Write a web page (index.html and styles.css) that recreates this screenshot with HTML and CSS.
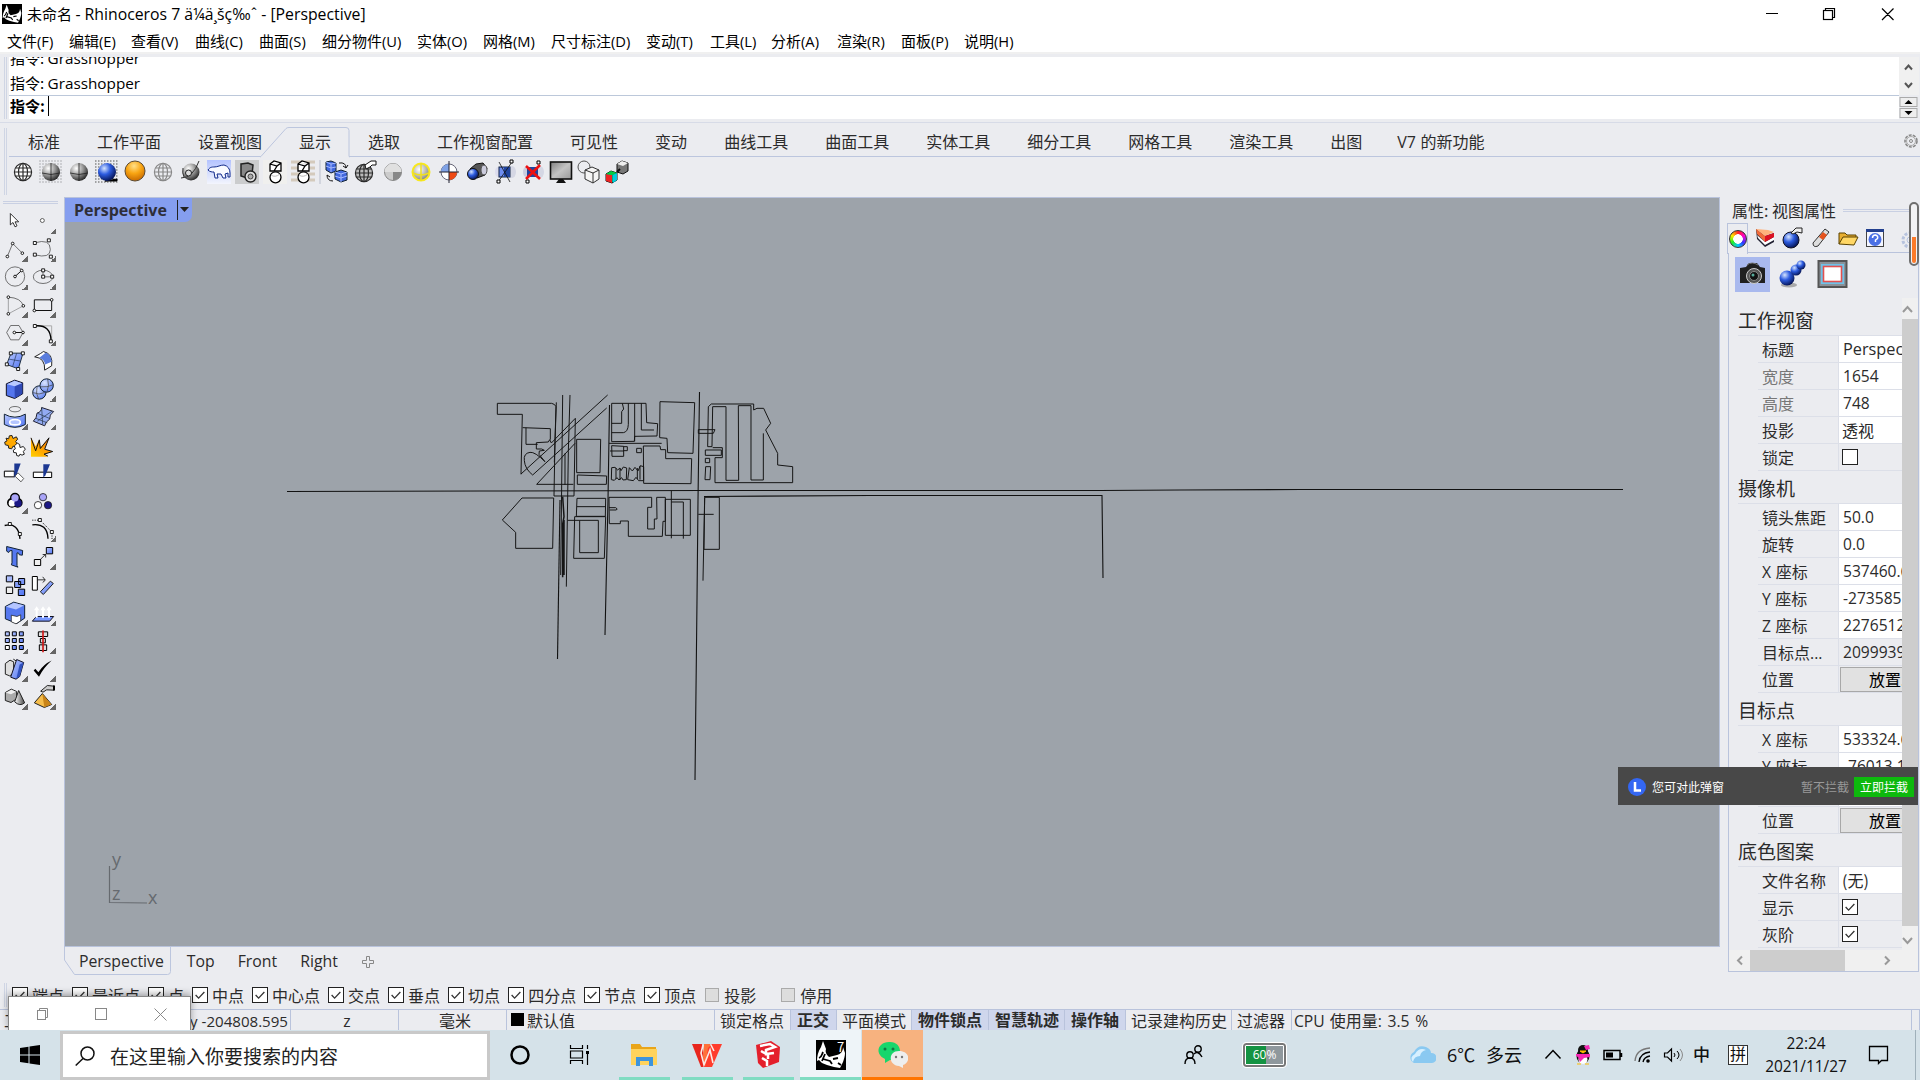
FILE: index.html
```
<!DOCTYPE html>
<html lang="zh-CN">
<head>
<meta charset="utf-8">
<title>未命名 - Rhinoceros 7</title>
<link rel="stylesheet" href="styles.css">
</head>
<body>
<svg class="defs" aria-hidden="true">
  <defs>
    <linearGradient id="blue" x1="0" y1="0" x2="1" y2="1"><stop offset="0" stop-color="#b9c8ff"/><stop offset="1" stop-color="#4f74f2"/></linearGradient>
    <linearGradient id="sky" x1="0" y1="0" x2="0" y2="1"><stop offset="0" stop-color="#b4c3ff"/><stop offset="1" stop-color="#f3f5fd"/></linearGradient>
    <linearGradient id="gray" x1="0" y1="0" x2="1" y2="0"><stop offset="0" stop-color="#fff"/><stop offset="1" stop-color="#444"/></linearGradient>
    <linearGradient id="screen" x1="0" y1="0" x2="1" y2="1"><stop offset="0" stop-color="#808080"/><stop offset=".5" stop-color="#c4c4c4"/><stop offset="1" stop-color="#999"/></linearGradient>
    <linearGradient id="flame" x1="0" y1="1" x2="1" y2="0"><stop offset="0" stop-color="#ffd000"/><stop offset="1" stop-color="#ff6a00"/></linearGradient>
    <radialGradient id="ballGray" cx=".35" cy=".3" r=".75"><stop offset="0" stop-color="#fff"/><stop offset=".5" stop-color="#999"/><stop offset="1" stop-color="#222"/></radialGradient>
    <radialGradient id="ballBlue" cx=".35" cy=".3" r=".75"><stop offset="0" stop-color="#d5e4ff"/><stop offset=".45" stop-color="#2d5ce0"/><stop offset="1" stop-color="#03104e"/></radialGradient>
    <radialGradient id="ballSoft" cx=".35" cy=".3" r=".75"><stop offset="0" stop-color="#dbe5ff"/><stop offset="1" stop-color="#5d80ee"/></radialGradient>
    <radialGradient id="ballOrange" cx=".45" cy=".25" r=".75"><stop offset="0" stop-color="#ffe08a"/><stop offset=".5" stop-color="#f9a512"/><stop offset="1" stop-color="#c86a00"/></radialGradient>
    <radialGradient id="ballYellow" cx=".4" cy=".35" r=".7"><stop offset="0" stop-color="#fff"/><stop offset=".7" stop-color="#a8a8a0"/><stop offset="1" stop-color="#777"/></radialGradient>
    <symbol id="rhino" viewBox="0 0 30 30">
      <rect width="30" height="30" fill="#000"/>
      <path d="M1 21c0-5 1-9 4-14L7 1l3 8c-1 3 0 5 3 8l8-2c4-1 6-4 6-8l2 6c0 3-1 6-2 9l-3 6-6-1-7-2-5-2-3-3z" fill="#fff"/>
      <path d="M3 18c3-1 3-4 4-6M7 19l7 2 2 3M17 19l5-1M22 23l3 2M9 14l-3 7" stroke="#000" stroke-width="1.8" fill="none"/>
    </symbol>
    <symbol id="globe" viewBox="0 0 24 24"><g fill="none" stroke="currentColor" stroke-width="1.2"><circle cx="12" cy="12" r="8.6"/><ellipse cx="12" cy="12" rx="4.500" ry="8.6"/><path d="M12 3.5v17M3.5 12h17M5 8h14M5 16h14"/></g></symbol>
    <symbol id="prism" viewBox="0 0 24 24"><path d="M7 4l4-3 7 2v8H7zM7 4l7 2 4-3M14 6l-3 5" fill="#fff" stroke="#000" stroke-width="1.3"/><circle cx="12.5" cy="17.3" r="5.500" fill="#fff" stroke="#000" stroke-width="1.3"/><path d="M8 15q4 3 9-1" fill="none" stroke="#bbb"/></symbol>
    <symbol id="check" viewBox="0 0 16 16"><path d="M3 8l3.4 3.6L13 4.6" fill="none" stroke="#333" stroke-width="1.5"/></symbol>
  </defs>
</svg>

<header class="titlebar">
  <svg class="app-icon"><use href="#rhino"/></svg>
  <div class="title">未命名 <i>- Rhinoceros 7 ä¼ä¸šç‰ˆ - [Perspective]</i></div>
  <svg class="winctl" viewBox="0 0 140 30"><g fill="none" stroke="#000" stroke-width="1.2"><path d="M6 13.500h12M122 8.500l11.500 11.500M133.500 8.500l-11.500 11.500M65.500 10V8.500h9v9H73"/><rect x="63.500" y="10.500" width="9" height="9"/></g></svg>
</header>
<nav class="menu">
  <span>文件<i>(F)</i></span><span>编辑<i>(E)</i></span><span>查看<i>(V)</i></span><span>曲线<i>(C)</i></span><span>曲面<i>(S)</i></span><span>细分物件<i>(U)</i></span><span>实体<i>(O)</i></span><span>网格<i>(M)</i></span><span>尺寸标注<i>(D)</i></span><span>变动<i>(T)</i></span><span>工具<i>(L)</i></span><span>分析<i>(A)</i></span><span>渲染<i>(R)</i></span><span>面板<i>(P)</i></span><span>说明<i>(H)</i></span>
</nav>

<section class="command">
  <div class="grip"></div>
  <div class="cmd-main">
    <div class="history"><p>指令: <i>Grasshopper</i></p><p>指令: <i>Grasshopper</i></p></div>
    <div class="prompt"><b>指令:</b><span class="caret"></span></div>
  </div>
  <div class="cmd-side">
    <svg class="cmd-scroll" viewBox="0 0 20 38"><path d="M6 12.500l3.500-4 3.500 4M6 26l3.500 4 3.500-4" fill="none" stroke="#555" stroke-width="2"/></svg>
    <svg class="cmd-spin" viewBox="0 0 20 23"><g fill="#eee" stroke="#aaa"><rect x="1" y="1.500" width="17" height="9"/><rect x="1" y="12.500" width="17" height="9"/></g><path d="M9.500 4l4 4h-8zM9.500 19l4-4h-8z"/></svg>
  </div>
</section>

<section class="toolbar">
  <div class="grip"></div>
  <div class="toolbar-main">
    <div class="tabs">
      <span>标准</span><span>工作平面</span><span>设置视图</span>
      <span class="on"><svg class="tab-shape" viewBox="0 0 92 32"><path d="M0 31.500L26 2.500q1-1 3-1h57q3 0 3 3v27" fill="#ebecf0" stroke="#bcc6de"/><path d="M1 31.500h88" stroke="#ebecf0" stroke-width="2"/></svg><em>显示</em></span>
      <span>选取</span><span>工作视窗配置</span><span>可见性</span><span>变动</span><span>曲线工具</span><span>曲面工具</span><span>实体工具</span><span>细分工具</span><span>网格工具</span><span>渲染工具</span><span>出图</span><span class="v7"><i>V7</i> 的新功能</span>
      <svg class="gear" viewBox="0 0 16 16"><circle cx="8" cy="8" r="6" fill="none" stroke="#888" stroke-width="1.600" stroke-dasharray="3 1.200"/><circle cx="8" cy="8" r="4.500" fill="none" stroke="#aaa"/><circle cx="8" cy="8" r="1.500" fill="none" stroke="#888"/></svg>
    </div>
    <div class="icons">
      <svg viewBox="0 0 24 24"><circle cx="12" cy="12" r="8" fill="#fff"/><use href="#globe"/></svg>
      <svg viewBox="0 0 24 24"><path d="M0 1h24M0 4h24M0 7h24M0 10h24M0 13h24M0 16h24M0 19h24M0 22h24" stroke="#c4c4c8" stroke-width="1.500" stroke-dasharray="2 1"/><circle cx="12" cy="12" r="9" fill="url(#ballGray)"/><path d="M12 3v18M3 13q9 3 18 0" stroke="#222" fill="none" stroke-width=".8"/></svg>
      <svg viewBox="0 0 24 24"><circle cx="12" cy="12" r="9" fill="url(#ballGray)"/><path d="M12 3v18M3 13q9 3 18 0" stroke="#222" fill="none" stroke-width=".8"/></svg>
      <svg viewBox="0 0 24 24"><path d="M0 1h24M0 4h24M0 7h24M0 10h24M0 13h24M0 16h24M0 19h24M0 22h24" stroke="#888" stroke-width="1.500" stroke-dasharray="1.500 1.500"/><path d="M10 21h12v-2z" fill="#000" stroke="#000"/><circle cx="12" cy="12" r="9" fill="url(#ballBlue)"/></svg>
      <svg viewBox="0 0 24 24"><circle cx="12" cy="11" r="10" fill="url(#ballOrange)" stroke="#5a4a33"/></svg>
      <svg viewBox="0 0 24 24" color="#888"><use href="#globe"/></svg>
      <svg viewBox="0 0 24 24"><circle cx="12" cy="12" r="8.500" fill="url(#ballGray)"/><path d="M2 18q12 0 18-17M4 8q-1 5 1 9" fill="none" stroke="#333"/><circle cx="9.500" cy="13" r="3" fill="#ddd" stroke="#222"/></svg>
      <svg viewBox="0 0 24 24"><rect width="24" height="24" fill="url(#sky)"/><path d="M1 10c2-3 4-3 6-3 4 0 6-2 10-2 4 1 6 4 6 8v4h-2v-4l-3 1 1 4h-3l-2-4h-4l1 4H8l-1-6c-2 0-4 0-6-2z" fill="#f9faff" stroke="#112a8a"/></svg>
      <svg viewBox="0 0 24 24"><rect width="24" height="24" fill="#cbcccd"/><path d="M6 4l7-1 5 2-1 9-5 4-6-2z" fill="#888" stroke="#222" stroke-width="1.500"/><circle cx="15.500" cy="16.500" r="5.500" fill="#ddd" stroke="#222" stroke-width="1.400"/><circle cx="15.500" cy="16.500" r="2.500" fill="#aaa" stroke="#444"/></svg>
      <svg viewBox="0 0 24 24"><rect width="24" height="24" fill="#f0f0ee"/><use href="#prism"/></svg>
      <svg viewBox="0 0 24 24"><path d="M0 2h24M0 8h24M0 14h24M0 20h24" stroke="#d4cabc" stroke-width="3"/><use href="#prism"/></svg>
      <span class="sep"></span>
      <svg viewBox="0 0 24 24"><path d="M1 2l5-1 5 2v8l-5 2-5-3zM10 12l6-2 6 2v8l-6 2-6-3z" fill="#4268dd" stroke="#123"/><path d="M1 2l5 2 5-1M6 4v8M10 12l6 2 6-2M16 14v8M1 6l5 2 5-1M10 16l6 2 6-2" fill="none" stroke="#a5b9ff"/><path d="M14 3q7-1 7 5M21 8l-3-2M21 8l2-3M2 15q0 6 6 6M2 15l3 2" fill="none" stroke="#111"/></svg>
      <svg viewBox="0 0 24 24"><circle cx="11" cy="13" r="8.500" fill="#bbb"/><g transform="translate(-1 1)"><use href="#globe" width="24" height="24"/></g><path d="M12 5l6-4h5v4h-4l-2 2-4 2z" fill="#fff" stroke="#111"/></svg>
      <svg viewBox="0 0 24 24"><circle cx="12" cy="12" r="8.500" fill="#ccc" stroke="#888"/><path d="M3.500 12a8.500 8.500 0 0 1 17 0z" fill="#e0e0e0"/><path d="M12 12h8.500a8.500 8.500 0 0 1-8.500 8.500z" fill="#888"/></svg>
      <svg viewBox="0 0 24 24"><circle cx="12" cy="12" r="8.500" fill="url(#ballYellow)" stroke="#f8e81c" stroke-width="2"/><path d="M12 3v18M4 13q8 4 16 0" stroke="#f0e020" stroke-width="1.500" fill="none"/></svg>
      <svg viewBox="0 0 24 24"><circle cx="12" cy="12" r="8" fill="#fff" stroke="#667"/><path d="M12 4a8 8 0 0 0-8 8h8z" fill="#7fa2e6"/><path d="M12 12h8a8 8 0 0 1-8 8z" fill="#f04a14"/><path d="M12 1v22M2 12h20" stroke="#223"/></svg>
      <svg viewBox="0 0 24 24"><path d="M5 9l6-5 7-1 4 5-2 7-8 3z" fill="#555" stroke="#111"/><circle cx="8" cy="14" r="5.500" fill="url(#ballBlue)" stroke="#111"/><ellipse cx="19" cy="10" rx="3" ry="5" fill="#ccd" stroke="#555"/></svg>
      <svg viewBox="0 0 24 24"><ellipse cx="5" cy="12" rx="3" ry="5" fill="#dde"/><ellipse cx="19" cy="12" rx="4" ry="6" fill="#d5d7e4"/><rect x="6" y="7" width="11" height="10" fill="#6d8df0" stroke="#124"/><path d="M11 7v10h6V7z" fill="#20449e"/><path d="M5 22L19 2M6 2l11 20" stroke="#111" stroke-width=".8"/><path d="M4 20h3v3H4zM17 0h3v3h-3z" fill="#fff" stroke="#000"/></svg>
      <svg viewBox="0 0 24 24"><ellipse cx="5" cy="12" rx="3" ry="5" fill="#ccd"/><ellipse cx="19" cy="12" rx="4" ry="6" fill="#d5d7e4"/><rect x="6" y="7" width="11" height="10" fill="#20449e"/><path d="M5 20h3v3H5zM16 1h3v3h-3z" fill="#fff" stroke="#000"/><path d="M5 6l14 13M19 5L5 19" stroke="#e11" stroke-width="2.600"/></svg>
      <svg viewBox="0 0 24 24"><rect x="1.500" y="2" width="21" height="17" fill="url(#screen)" stroke="#111" stroke-width="1.600"/><path d="M10 19h4l3 4H7z" fill="#111"/></svg>
      <svg viewBox="0 0 24 24"><circle cx="7" cy="7" r="6" fill="none" stroke="#555"/><path d="M8 10l7-3 7 3v9l-6 4-8-4zM8 10l8 3v10M16 13l6-3" fill="#f5f5f5" stroke="#333"/></svg>
      <svg viewBox="0 0 24 24"><path d="M12 4l5-3 6 2v8l-5 3-6-2z" fill="#777" stroke="#111"/><path d="M12 4l5-3 6 2-5 3z" fill="#eee"/><path d="M1 14l5-3 6 2v7l-5 3-6-2z" fill="#0a8" stroke="#111"/><path d="M1 14l6 1v8l-6-2z" fill="#e22"/><path d="M1 14l5-3 6 2-5 2z" fill="#0c4"/><path d="M8 15l4-2v7l-4 3z" fill="#0cd"/><path d="M12 12l3-3" stroke="#111" stroke-width="2"/></svg>
    </div>
  </div>
</section>

<main class="work">
  <aside class="tools">
    <svg viewBox="0 47 84 83"><path d="M31 69v34l8-7 6 13 6-3-6-12h11z" fill="#fff" stroke="#111" stroke-width="2.500"/></svg>
    <svg class="more" viewBox="84 47 84 83"><circle cx="127" cy="90" r="6" fill="#fff" stroke="#444" stroke-width="2.500"/></svg>
    <svg class="more" viewBox="0 130 84 83"><path d="M22 197l16-39 29 29" class="ln"/><g class="nd"><circle cx="22" cy="197" r="4"/><circle cx="38" cy="158" r="4"/><circle cx="67" cy="187" r="4"/></g></svg>
    <svg class="more" viewBox="84 130 84 83"><path d="M104 156q47-14 47 20 0 28-47 16" class="ln"/><path class="nd" d="M100 152h9v9h-9zM142 144h9v9h-9zM100 187h9v9h-9zM148 193h9v9h-9z"/></svg>
    <svg class="more" viewBox="0 213 84 83"><circle cx="45" cy="256" r="29" class="ln"/><path d="M45 256l20-18" stroke="#111" stroke-width="3"/><g class="nd"><circle cx="45" cy="256" r="4"/><circle cx="65" cy="238" r="4"/></g></svg>
    <svg class="more" viewBox="84 213 84 83"><ellipse cx="129" cy="257" rx="29" ry="20" class="ln"/><path d="M129 257v-20M129 257h27" class="ln"/><path class="nd" d="M125 233h9v9h-9zM125 252h9v9h-9zM152 252h9v9h-9z"/></svg>
    <svg class="more" viewBox="0 295 84 83"><path d="M25 316v50l45-24" class="ln" stroke-opacity=".6"/><path d="M25 316q38 2 45 26" class="ln"/><g class="nd"><circle cx="25" cy="316" r="4"/><circle cx="25" cy="366" r="4"/><circle cx="70" cy="342" r="4"/></g></svg>
    <svg class="more" viewBox="84 295 84 83"><path d="M103 324h52v32h-52z" fill="none" stroke="#111" stroke-width="3"/><g class="nd"><circle cx="155" cy="324" r="4"/><circle cx="103" cy="356" r="4"/></g></svg>
    <svg class="more" viewBox="0 378 84 83"><path d="M32 400h25l12 21-12 22H32l-12-22z" class="ln"/><path d="M42 421h26" stroke="#111" stroke-width="3"/><g class="nd"><circle cx="43" cy="421" r="4"/><circle cx="69" cy="421" r="4"/></g></svg>
    <svg class="more" viewBox="84 378 84 83"><path d="M108 401h47v44" fill="none" stroke="#aaa" stroke-width="3"/><path d="M108 401q44-3 45 44" fill="none" stroke="#000" stroke-width="4"/><path class="nd" d="M100 397h9v9h-9zM148 443h9v9h-9z"/></svg>
    <svg class="more" viewBox="0 461 84 83"><path d="M33 482h36l-14 47-35-13z" fill="url(#blue)" stroke="#234" stroke-width="3"/><path d="M50 482l-12 40M27 500l36 6" stroke="#235" stroke-width="2"/><path class="nd" d="M28 478h9v9h-9zM64 478h9v9h-9zM16 511h9v9h-9zM50 525h9v9h-9z"/></svg>
    <svg class="more" viewBox="84 461 84 83"><path d="M104 493q22-12 26-16 30 6 25 43l-21 13q2-37-30-40z" fill="#fff" stroke="#222" stroke-width="3"/><path d="M118 496l20-16q16 8 17 28l-20 8q-1-14-17-20z" fill="#5a7ddd"/></svg>
    <svg class="more" viewBox="0 544 84 83"><path d="M19 573l25-11 24 8v33l-24 14-25-9z" fill="#5475ed" stroke="#112" stroke-width="3"/><path d="M21 574l23-10 22 7-22 9z" fill="#b9c9ff"/><path d="M44 581l23-10v32l-23 13z" fill="#3049b5"/></svg>
    <svg class="more" viewBox="84 544 84 83"><g fill="url(#ballSoft)" stroke="#123" stroke-width="3"><circle cx="118" cy="599" r="20"/><circle cx="140" cy="578" r="20"/></g><path d="M98 599q20 9 36 0M111 582q-5 20 5 37M122 582q18 2 38-6M143 558q6 20-2 39" class="ln"/></svg>
    <svg class="more" viewBox="0 627 84 83"><ellipse cx="45" cy="648" rx="17" ry="8" class="ln"/><path d="M13 663q32 18 63 0v31q-31 17-63 0z" fill="url(#blue)" stroke="#123" stroke-width="3"/><ellipse cx="45" cy="687" rx="16" ry="8" fill="#b5c6ff" stroke="#fff" stroke-width="5"/></svg>
    <svg class="more" viewBox="84 627 84 83"><path d="M125 643l36 12q-14 10-12 23-12 7-15 20l-34-14q11-10 11-24 14-4 14-17z" fill="#93abf2" stroke="#223" stroke-width="3"/><path d="M112 660l37 16M112 684l44-30M125 643l3 51M106 675l36 14" stroke="#234" stroke-width="2"/></svg>
    <svg viewBox="0 710 84 83"><path d="M18 734l8 2 2-9 8-1 3 9 10-5 4 7-6 7 6 9-6 7-8-2-4 8-9-2-1-8-9-2-2-8 7-4z" fill="#ffa900" stroke="#222" stroke-width="3"/><path d="M43 757l9-8 7 4 1 9 10-3 6 8-6 7 3 8-7 3-6-3-3 6-7-2-1-8-8-1-1-7 6-4z" fill="#fff" stroke="#222" stroke-width="3"/></svg>
    <svg viewBox="84 710 84 83"><path d="M93 790v-57l14 25 11-19 3 22 26-27-14 33 25 7-26 10 12 6z" fill="url(#flame)"/><path d="M93 733l14 39 11-33 3 26 26-32-13 34 24 7-26 8 12 6" fill="none" stroke="#111" stroke-width="3"/></svg>
    <svg viewBox="0 793 84 83"><path d="M13 832h30v17H13z" fill="#fff" stroke="#000" stroke-width="3"/><path d="M43 809h19l-13 36-6 7z" fill="#1c3892"/><path d="M45 847l9-10 17 17-8 10z" fill="#fff" stroke="#444" stroke-width="2.500"/></svg>
    <svg viewBox="84 793 84 83"><path d="M100 835h55v16h-55z" fill="#fff" stroke="#000" stroke-width="3"/><path d="M130 811h20l-14 34-6 6z" fill="#1c3892"/></svg>
    <svg class="more" viewBox="0 875 84 83"><g stroke="#000" stroke-width="8"><circle cx="36" cy="925" r="11"/><circle cx="53" cy="925" r="11"/><circle cx="45" cy="910" r="11"/></g><circle cx="36" cy="926" r="10" fill="#fff"/><circle cx="54" cy="926" r="11" fill="#1b1785"/><circle cx="45" cy="910" r="11" fill="#a9a4f8"/></svg>
    <svg viewBox="84 875 84 83"><g stroke="#222" stroke-width="2.500"><circle cx="129" cy="908" r="11" fill="#a9a4f8"/><circle cx="114" cy="932" r="11" fill="#fff"/><circle cx="144" cy="932" r="11" fill="#1b1785"/></g></svg>
    <svg viewBox="0 958 84 83"><path d="M14 992q42-10 46 40" fill="none" stroke="#000" stroke-width="4"/><path class="nd" d="M25 983h9v9h-9zM55 1013h9v9h-9z"/></svg>
    <svg class="more" viewBox="84 958 84 83"><path d="M97 990q45-6 47 42" fill="none" stroke="#000" stroke-width="4"/><path d="M97 976h23l36 36v24" fill="none" stroke="#000" stroke-width="3" stroke-dasharray="3 4"/><path class="nd" d="M115 971h9v9h-9zM151 1007h9v9h-9z"/></svg>
    <svg viewBox="0 1041 84 83"><path d="M20 1054l48 12-1 14-9-1-2-5-5-1v38l3 5-20-7 2-6v-37l-7 1-3 5-6-4z" fill="#5578f0" stroke="#123" stroke-width="3"/></svg>
    <svg class="more" viewBox="84 1041 84 83"><path d="M117 1097l20-20m-9 1h9v9" fill="none" stroke="#111" stroke-width="2.500"/><path d="M139 1057h19v19h-19z" fill="url(#blue)" stroke="#000" stroke-width="3"/><path d="M103 1093h19v18h-19z" fill="#eee" stroke="#000" stroke-width="3"/></svg>
    <svg viewBox="0 1124 84 83"><g fill="url(#blue)" stroke="#000" stroke-width="3"><path d="M19 1141h19v18H19zM56 1149h18v18H56zM44 1158h18v18H44zM55 1181h19v19H55z"/></g><path d="M19 1175h19v19H19z" fill="#eee" stroke="#000" stroke-width="3"/></svg>
    <svg viewBox="84 1124 84 83"><path d="M97 1143h15v41H97z" fill="#fff" stroke="#000" stroke-width="3"/><path d="M113 1153h22m-7-9l8 10-8 7" fill="none" stroke="#111" stroke-width="2.500"/><path d="M121 1189l30-32 9 7-30 33z" fill="url(#blue)" stroke="#222" stroke-width="3"/></svg>
    <svg class="more" viewBox="0 1207 84 83"><path d="M16 1232l25-13 33 9v39l-24 16-34-14z" fill="#5578ef" stroke="#123" stroke-width="3"/><path d="M18 1233l24-12 30 8-24 12z" fill="#b4c5ff"/><path d="M34 1258l17 4 11-5v18l-14 9-14-6z" fill="#fff" stroke="#111" stroke-width="2"/></svg>
    <svg class="more" viewBox="84 1207 84 83"><path d="M109 1262h52l-12 14H97z" fill="#7998ff" stroke="#112" stroke-width="3"/><path d="M110 1266v-27M129 1266v-27M147 1266v-27" stroke="#fff" stroke-width="6"/><path d="M102 1243l8-12 8 12zM121 1243l8-12 8 12zM139 1243l8-12 8 12z" fill="#fff"/></svg>
    <svg class="more" viewBox="0 1289 84 83"><g fill="url(#blue)" stroke="#000" stroke-width="3"><path d="M16 1306h12v12H16zM37 1306h12v12H37zM58 1306h12v12H58zM16 1326h12v12H16zM37 1326h12v12H37zM58 1326h12v12H58zM37 1347h12v12H37zM58 1347h12v12H58z"/><path fill="#fff" d="M16 1347h12v12H16z"/></g></svg>
    <svg class="more" viewBox="84 1289 84 83"><path d="M115 1306h28v14h-28zM121 1326h15v13h-15zM118 1345h22v17h-22z" fill="#ddd" stroke="#000" stroke-width="3"/><path d="M129 1302v65" stroke="#d01818" stroke-width="5"/></svg>
    <svg class="more" viewBox="0 1372 84 83"><path d="M16 1400l14-10 11 5v34l-12 8-13-5z" fill="#ddd" stroke="#222" stroke-width="3"/><path d="M40 1387l8 5" stroke="#222" stroke-width="3"/><path d="M50 1388l21 9-12 42-11 8-16-6z" fill="url(#blue)" stroke="#112" stroke-width="3"/><path d="M71 1397l-12 42-10 7 10-43z" fill="#3151bd"/></svg>
    <svg class="more" viewBox="84 1372 84 83"><path d="M101 1421l5-5 9 10q16-24 40-35-25 22-38 49z" fill="#000"/></svg>
    <svg class="more" viewBox="0 1455 84 83"><path d="M16 1486l18-10 16 7v22l-17 11-17-6z" fill="#aaa" stroke="#222" stroke-width="3"/><path d="M17 1487l17-9 14 6-15 7z" fill="#eee"/><path d="M56 1480l18 37q-14 12-30-3z" fill="url(#gray)" stroke="#222" stroke-width="3"/></svg>
    <svg class="more" viewBox="84 1455 84 83"><path d="M122 1482l20-17 20 2v12l-22-1-11 7z" fill="#ccc" stroke="#222" stroke-width="3"/><path d="M162 1465v15" stroke="#000" stroke-width="6"/><path d="M127 1489l28 33-22 9-30-14z" fill="#f5bd4b" stroke="#222" stroke-width="3"/><path d="M127 1490l27 32-21 8z" fill="#c98418"/></svg>
  </aside>

  <section class="viewport">
    <svg class="scene" viewBox="65 198 1654 748">
      <g fill="none" stroke="#111" stroke-width="1.100">
        <path d="M287 491.500L480 491 704 490.500 1100 490.500 1180 490 1300 489.500 1623 489.500"/>
        <path d="M704 496.500L870 495.500 1102 495.500 1103 578"/>
        <path d="M699.500 392L698 500 697 600 695 780"/>
        <path d="M609.500 405L608 500 605 635"/>
        <path d="M556.500 402L559.500 520 557.500 659" stroke-opacity="0"/>
        <path d="M560 500L557.500 659"/>
      </g>
      <g transform="translate(480 380) scale(.333333)" fill="none" stroke="#151515" stroke-width="3">
        <path d="M52 70H215q10 2 13 10l-3 103-3 165h60l4-233-72 74-5-10-4 7-36 2v19h16l8 4-15 2-1 10 18 22q-30-30-45-28-20 3-17 25 2 25 25 43M52 70v33h75l-4 180"/>
        <path d="M128 143l83 3v33M138 143v50h35M229 67l-6 180M248 45l-6 540M270 45l-5 170-6 405M383 45L123 282M380 84L158 285M285 190L170 313h110M290 178h72l-2 100h-70zM292 285l88 3-1 25h-87zM255 220v95"/>
        <path d="M395 185V70h103l2 58 33 3-2 37-67 1-1 15zM464 70v114M395 130h30V95l6-8-4-17M395 158h35q14-2 15-25V70M484 70v80h38M387 190h158M540 65l104 3-5 152-76-2-2-43-22-2zM395 197l36 2v30h-35zM430 200h12v12h-12M390 213h42M470 205h14v13h-14zM490 198h50l2 11h15v27h78l-2 75-142-1z"/>
        <path d="M395 263l10-1 8 8 7-6 3 8 7-11 10 3-1 35-10 1-4-7-8 7-6-7-8 8-9-2zM408 264v33M420 266v34M443 299l5-36 9 10 8-11 9 11 7-16 10 3v42h-15l-8-10-8 10zM472 264v33M480 258v41"/>
        <path d="M683 200l2-120 9-8h127v18l10-5h20l21 45-15 20 36 70v35l45 5v48H705v-75h22v-30h-29M698 80h40v221h38l-1-224h38v223h37V160M698 80l-2 120h-13M655 149h50l-5 11h-45zM676 210h48v16h-48zM676 235h13v13h-13zM677 260h15l-2 39h-15z"/>
        <path d="M126 354h95l-3 151H107v-48l-40-37zM291 355h86l-1 54h-87zM291 380h86M284 410h93l-4 125h-92zM263 421h92v97h-56v-96M387 352h128v30h-12v65h20v-30h8l-1-65h26v72h-7l-2 45H445v-46h-24v8h-33zM387 383h20q8 4 2 7h-20M556 358h75v108h-75zM574 332v143M574 366h36v110M674 352h44v156h-46zM655 403h46M674 352l-5 250"/>
        <path d="M248 350l4 60-4 22v160M252 420v165" stroke-width="4.500"/>
      </g>
      <path d="M109.500 866v36.500L147 903" fill="none" stroke="#666a6f" stroke-width="1.200"/>
      <g class="axis"><text x="112" y="866">y</text><text x="112" y="900">z</text><text x="148" y="904">x</text></g>
    </svg>
    <div class="view-label"><span>Perspective</span><svg viewBox="0 0 14 24"><path d="M.5 2v20" stroke="#222"/><path d="M3 9h9l-4.500 5z" fill="#222"/></svg></div>
  </section>

  <nav class="view-tabs">
    <span class="current"><svg viewBox="0 0 108 28"><path d="M.5 0v13l10 14.500h93q3 0 3-3V0" fill="none" stroke="#bcc6de"/></svg><em>Perspective</em></span><span>Top</span><span>Front</span><span>Right</span>
    <svg class="plus" viewBox="0 0 12 12"><path d="M4.500.5h3v4h4v3h-4v4h-3v-4h-4v-3h4z" fill="none" stroke="#888"/></svg>
  </nav>

  <aside class="panel">
    <h1>属性: 视图属性</h1>
    <div class="panel-tabs">
      <div class="ptab on-top"><span class="wheel"></span></div>
      <svg viewBox="0 0 24 24"><path d="M3 3l9 7 9-3v9l-9 5-8-8z" fill="#223"/><path d="M3 3l9 7 9-4-6-2z" fill="#ffb27c"/><path d="M3 3l9 7v6L4 8z" fill="#f06a3a"/><path d="M4 9l8 7 9-5v3l-9 5-7-7z" fill="#fff"/><path d="M12 10l9-3v4l-9 5z" fill="#d12"/></svg>
      <svg viewBox="0 0 24 24"><circle cx="11" cy="14" r="8" fill="url(#ballBlue)" stroke="#112"/><path d="M11 7l5-5h6v5l-5-1-4 2z" fill="#eee" stroke="#222"/></svg>
      <svg viewBox="0 0 24 24"><path d="M5 17L17 3l4 3L10 20q-5 2-5-3z" fill="#ddd" stroke="#333"/><path d="M11 11l4-5 4 3-4 5z" fill="#e5521c"/></svg>
      <svg viewBox="0 0 24 24"><path d="M3 18V7h6l2 2h9v3" fill="#e8ae30" stroke="#5a4300"/><path d="M3 18l4-7h15l-4 8z" fill="#ffd765" stroke="#5a4300"/></svg>
      <svg viewBox="0 0 24 24"><rect x="3.500" y="3.500" width="17" height="17" fill="#f4f6ff" stroke="#444"/><path d="M3 3h18v3H3z" fill="#223f8e"/><circle cx="12" cy="13.500" r="6.500" fill="#4a70e5"/><path d="M9.500 12q0-3 3-3 3 1 2 3.500l-2 1.500v2" fill="none" stroke="#fff" stroke-width="1.500"/></svg>
      <svg class="pgear" viewBox="0 0 24 24"><circle cx="14" cy="14" r="7" fill="none" stroke="#b7c3de" stroke-width="3" stroke-dasharray="3 1.500"/><circle cx="14" cy="14" r="3" fill="none" stroke="#b7c3de"/></svg>
    </div>
    <div class="panel-body">
      <div class="modes">
        <svg class="sel" viewBox="0 0 35 35"><path d="M5 11l6-1 3-4h8l3 4 5 1v15H5z" fill="#202020"/><path d="M12 8q5-4 11 0" fill="none" stroke="#777"/><circle cx="19" cy="19" r="7.500" fill="#555" stroke="#ccc"/><circle cx="19" cy="19" r="4.500" fill="#111" stroke="#888"/><circle cx="18" cy="18" r="1.500" fill="#5a9"/></svg>
        <svg viewBox="0 0 35 35"><ellipse cx="14" cy="28" rx="8" ry="2.500" fill="#aaa"/><circle cx="12" cy="21" r="7.500" fill="url(#ballBlue)"/><circle cx="21" cy="13" r="5.500" fill="url(#ballBlue)"/><circle cx="26" cy="8" r="4.500" fill="url(#ballBlue)"/></svg>
        <svg viewBox="0 0 35 35"><rect x="3.500" y="4" width="28" height="26" fill="#8b9299" stroke="#555" stroke-width="2"/><rect x="6" y="7" width="23" height="20" fill="#6fc2e8"/><rect x="8.500" y="9.500" width="18" height="15" fill="#fff" stroke="#e2504f" stroke-width="1.600"/></svg>
      </div>
      <div class="scroller">
        <div class="props">
          <h2>工作视窗</h2>
          <dl><dt>标题</dt><dd class="name">Perspective</dd></dl>
          <dl class="dim"><dt>宽度</dt><dd>1654</dd></dl>
          <dl class="dim"><dt>高度</dt><dd>748</dd></dl>
          <dl><dt>投影</dt><dd class="cjk">透视</dd></dl>
          <dl><dt>锁定</dt><dd class="flat"><span class="box"></span></dd></dl>
          <h2>摄像机</h2>
          <dl><dt>镜头焦距</dt><dd>50.0</dd></dl>
          <dl><dt>旋转</dt><dd>0.0</dd></dl>
          <dl><dt><i>X</i> 座标</dt><dd>537460.6</dd></dl>
          <dl><dt><i>Y</i> 座标</dt><dd>-273585</dd></dl>
          <dl><dt><i>Z</i> 座标</dt><dd>2276512</dd></dl>
          <dl><dt>目标点<i>...</i></dt><dd class="flat num">2099939</dd></dl>
          <dl><dt>位置</dt><dd class="flat"><button>放置...</button></dd></dl>
          <h2>目标点</h2>
          <dl><dt><i>X</i> 座标</dt><dd>533324.6</dd></dl>
          <dl><dt><i>Y</i> 座标</dt><dd>-76013.1</dd></dl>
          <dl><dt><i>Z</i> 座标</dt><dd>0.0</dd></dl>
          <dl><dt>位置</dt><dd class="flat"><button>放置...</button></dd></dl>
          <h2>底色图案</h2>
          <dl><dt>文件名称</dt><dd class="cjk">(无)</dd></dl>
          <dl><dt>显示</dt><dd class="flat"><span class="box"><svg><use href="#check"/></svg></span></dd></dl>
          <dl><dt>灰阶</dt><dd class="flat"><span class="box"><svg><use href="#check"/></svg></span></dd></dl>
        </div>
        <div class="vbar"><svg viewBox="0 0 16 21"><path d="M1 14l4.500-5 4.500 5" fill="none" stroke="#999" stroke-width="2"/></svg><div class="thumb"></div><svg viewBox="0 0 16 21"><path d="M1 12l4.500 5 4.500-5" fill="none" stroke="#999" stroke-width="2"/></svg></div>
      </div>
      <div class="hbar"><svg viewBox="0 0 21 21"><path d="M13 6.500l-4 4 4 4" fill="none" stroke="#999" stroke-width="2"/></svg><div class="thumb"></div><svg class="end" viewBox="0 0 21 21"><path d="M8 6.500l4 4-4 4" fill="none" stroke="#999" stroke-width="2"/></svg></div>
    </div>
    <div class="capsule"><span></span></div>
  </aside>
</main>

<section class="osnap">
  <div class="grip"></div>
  <label><span class="box"><svg><use href="#check"/></svg></span>端点</label>
  <label><span class="box"><svg><use href="#check"/></svg></span>最近点</label>
  <label><span class="box"><svg><use href="#check"/></svg></span>点</label>
  <label><span class="box"><svg><use href="#check"/></svg></span>中点</label>
  <label><span class="box"><svg><use href="#check"/></svg></span>中心点</label>
  <label><span class="box"><svg><use href="#check"/></svg></span>交点</label>
  <label><span class="box"><svg><use href="#check"/></svg></span>垂点</label>
  <label><span class="box"><svg><use href="#check"/></svg></span>切点</label>
  <label><span class="box"><svg><use href="#check"/></svg></span>四分点</label>
  <label><span class="box"><svg><use href="#check"/></svg></span>节点</label>
  <label><span class="box"><svg><use href="#check"/></svg></span>顶点</label>
  <label><span class="box off"></span>投影</label>
  <label class="wide"><span class="box off"></span>停用</label>
</section>

<section class="status">
  <span class="first">工作平面</span><span class="coord"><i>y -204808.595</i></span><span class="mid"><i>z</i></span><span class="mid">毫米</span><span class="layer"><u></u>默认值</span>
  <span>锁定格点</span><span class="act">正交</span><span>平面模式</span><span class="act">物件锁点</span><span class="act">智慧轨迹</span><span class="act">操作轴</span><span>记录建构历史</span><span>过滤器</span><span class="cpu"><i>CPU</i> 使用量<i>: 3.5 %</i></span><span></span>
</section>

<footer class="taskbar">
  <svg class="start" viewBox="0 0 20 20"><path d="M0 3l8.500-1.200v7.700H0zM9.500 1.600L20 0v9.500H9.500zM0 10.500h8.500v7.700L0 17zM9.500 10.500H20V20L9.500 18.400z"/></svg>
  <div class="search"><svg viewBox="0 0 20 20"><circle cx="12.500" cy="7.500" r="6.500" fill="none" stroke="#111" stroke-width="1.500"/><path d="M8 12.500L.7 19.500" stroke="#111" stroke-width="1.500"/></svg>在这里输入你要搜索的内容</div>
  <div class="apps">
    <div><svg viewBox="0 0 30 30"><circle cx="15" cy="15" r="8.500" fill="none" stroke="#000" stroke-width="2.500"/></svg></div>
    <div><svg viewBox="0 0 30 30"><path d="M5.500 5v3.500h12V5M5.500 24v-3.500h12V24M5.500 11h12v7h-12zM22.500 5v4M22.500 14v11" fill="none" stroke="#000" stroke-width="1.200"/><path d="M21 11h3v3h-3z"/></svg></div>
    <div class="run"><svg viewBox="0 0 30 30"><path d="M2 4h9l2 3h14v18H2z" fill="#e9a519"/><path d="M2 9h26v16H2z" fill="#ffd35c"/><path d="M7 26v-9h17v9h-4v-5h-9v5z" fill="#3d94dc"/></svg></div>
    <div class="run"><svg viewBox="0 0 30 30"><path d="M0 4h10l4 23H9z" fill="#e8261d"/><path d="M12 4h6l3 8-5 15h-3l-2-10z" fill="#ff7139"/><path d="M30 4H20l-4 4-3 19h7z" fill="#ff3c2c"/><path d="M11 5l-2 8 3 12 6-15 3 13M19 5l3 6" fill="none" stroke="#fbe9e4" stroke-width="1.600"/></svg></div>
    <div class="run"><svg viewBox="0 0 30 30"><path d="M3 5L18 1l9 6-1 15-16 6-5-5z" fill="#e41f2b"/><path d="M7 6l10-2 5 3-9 3v4l8-1M8 11l7 4v4M9 18l5 3v5" fill="none" stroke="#fff" stroke-width="2.500"/></svg></div>
    <div class="run rh"><svg viewBox="0 0 30 30"><use href="#rhino" width="30" height="30"/><text x="21" y="12" fill="#fff" font-size="13">7</text></svg></div>
    <div class="run wx"><svg viewBox="0 0 30 30"><path d="M11 2c14-1 15 18 1 18l-5 3v-4C-4 14 0 2 11 2z" fill="#18d66c"/><circle cx="7" cy="9" r="1.500" fill="#174"/><circle cx="15" cy="9" r="1.500" fill="#174"/><path d="M21 11c11 0 12 11 4 14v3l-4-2c-11-1-11-15 0-15z" fill="#eee"/><circle cx="18" cy="17" r="1.200" fill="#777"/><circle cx="24" cy="17" r="1.200" fill="#777"/></svg></div>
  </div>
  <div class="tray">
    <svg class="people" viewBox="0 0 20 20"><g fill="none" stroke="#000" stroke-width="1.400"><circle cx="14" cy="4" r="3.200"/><circle cx="6" cy="10" r="3.200"/><path d="M1 19q0-6 5-6t5 6M10 9q4-4 8 3"/></g></svg>
    <div class="battery"><span>60%</span></div>
    <svg class="cloud" viewBox="0 0 28 20"><path d="M6 18a6 6 0 0 1 0-11Q10-1 18 2q5 2 5 6a5 5 0 0 1 1 10z" fill="#8ac9f1"/><path d="M5 17q-4-5 2-8 4-7 11-4-5 1-6 6-6 0-7 6z" fill="#d7f0ff"/></svg>
    <div class="temp">6℃ 多云</div>
    <div class="sys">
      <svg viewBox="0 0 20 20"><path d="M2.500 13.500l7.500-8 7.500 8" fill="none" stroke="#000" stroke-width="1.500"/></svg>
      <svg viewBox="0 0 20 20"><ellipse cx="10" cy="11" rx="6.500" ry="7.500" fill="#111"/><circle cx="10" cy="5" r="5" fill="#111"/><ellipse cx="10" cy="14.500" rx="4.500" ry="4.500" fill="#fff"/><path d="M3 9h14v3l-6 1-4 4-2-5-2-1z" fill="#f527b4"/><path d="M11 1l5-1 1 4-4 1z" fill="#f527b4"/><path d="M7 6h6l-3 2zM4 19h4M12 19h4" fill="#fb0" stroke="#fb0"/></svg>
      <svg viewBox="0 0 20 20"><path d="M1 5.500h16v9H1zM18.500 8v4" fill="none" stroke="#000" stroke-width="1.500"/><path d="M3 7.500h7v5H3z"/></svg>
      <svg viewBox="0 0 20 20"><g fill="none" stroke="#000" stroke-width="1.300"><path d="M2 16Q3 4 17 3" stroke="#777"/><path d="M6 17q1-9 11-10M10 17q1-5 7-6"/></g><circle cx="15" cy="16" r="1.800"/></svg>
      <svg viewBox="0 0 20 20"><path d="M1.500 8h3l4-4v12l-4-4h-3z" fill="none" stroke="#000" stroke-width="1.200"/><path d="M11 8q2 2 0 4M14 6q4 4 0 8" fill="none" stroke="#000"/><path d="M17 4q5 6 0 12" fill="none" stroke="#888"/></svg>
    </div>
    <div class="ime">中</div>
    <div class="pin">拼</div>
    <div class="clock"><span>22:24</span><span>2021/11/27</span></div>
    <svg class="note" viewBox="0 0 22 22"><path d="M1.500 2.500h18v14h-6l-3 3v-3h-9z" fill="none" stroke="#000" stroke-width="1.300"/></svg>
  </div>
</footer>

<div class="mini"><svg viewBox="0 0 182 33"><g fill="none" stroke="#888"><path d="M30.500 13.500v-2h8v9h-2"/><rect x="28.500" y="13.500" width="8" height="9"/><rect x="86.500" y="11.500" width="11" height="11"/><path d="M145.500 11.500l12 12M157.500 11.500l-12 12"/></g></svg></div>

<div class="toast">
  <svg viewBox="0 0 18 18"><circle cx="9" cy="9" r="9" fill="#3467f3"/><path d="M7 4v8.500h6" fill="none" stroke="#fff" stroke-width="2.500"/></svg>
  <span class="msg">您可对此弹窗</span><span class="skip">暂不拦截</span><span class="block">立即拦截</span>
</div>
</body>
</html>
```
FILE: styles.css
```
* { box-sizing: border-box; }
body {
  margin: 0; width: 1920px; height: 1080px; overflow: hidden; position: relative;
  display: flex; flex-direction: column;
  background: #ebecf0; color: #2b2b2b;
  font: 16px/20px "Noto Sans CJK SC", sans-serif;
  white-space: nowrap;
}
i, em { font-style: normal; }
i { font-family: "Open Sans", "Noto Sans CJK SC", sans-serif; font-size: .98em; }
p, h1, h2, dl, dd { margin: 0; font-weight: 400; }
svg { display: block; flex: none; }
.defs { position: absolute; width: 0; height: 0; }
.grip { width: 3px; flex: none; border: solid #cfd5e4; border-width: 0 1px; }

.titlebar { height: 30px; flex: none; display: flex; align-items: center; background: #fff; color: #000; font-size: 15px; }
.app-icon { width: 20px; height: 20px; margin: 0 5px 2px 2px; }
.title { margin-top: -2px; }
.title i { font-size: 15.8px; }
.winctl { width: 140px; height: 30px; margin-left: auto; margin-right: 20px; }
.menu {
  height: 27px; flex: none; padding-left: 7px; display: grid; align-items: center; line-height: 22px; padding-bottom: 5px;
  grid-template-columns: 62px 62px 64px 64px 63px 95px 66px 68px 95px 64px 61px 66px 64px 63px 80px;
  background: linear-gradient(#fff 22px, #f0f0f0 22px 24px, #ebecf0 24px); color: #000; font-size: 15px;
}

.command { height: 62px; flex: none; display: flex; padding-left: 4px; font-size: 15px; color: #000; }
.command i { font-size: 15.3px; }
.cmd-main { flex: 1; margin-left: 2px; background: #fff; }
.history { height: 39px; border-bottom: 1px solid #bcc8da; overflow: hidden; display: flex; flex-direction: column; justify-content: flex-end; line-height: 25px; }
.history p { height: 25px; }
.prompt { height: 23px; display: flex; align-items: center; gap: 3px; padding-bottom: 4px; }
.history p, .prompt b { padding-left: 1px; }
.caret { width: 1px; height: 20px; background: #000; }
.cmd-side { width: 21px; background: #ebecf0; }
.cmd-scroll { width: 20px; height: 38px; background: #f0f0f0; margin-bottom: 1px; }
.cmd-spin { width: 20px; height: 23px; }

.toolbar { height: 78px; flex: none; margin-top: 3px; display: flex; padding-left: 4px; border-top: 1px solid #d7dbe7; }
.toolbar .grip { margin: 5px 2px 5px 0; }
.toolbar-main { flex: 1; }
.tabs { height: 34px; display: flex; gap: 37px; align-items: center; padding: 3px 0 0 19px; border-bottom: 1px solid #bcc6de; }
.on { position: relative; }
.on em { position: relative; }
.tab-shape { position: absolute; left: -39px; top: -5px; width: 92px; height: 32px; }
.v7 { margin-left: -2px; word-spacing: 1px; }
.v7 i { font-size: 16px; }
.gear { width: 16px; height: 16px; margin: -1px 1px 0 auto; }
.icons { display: flex; gap: 4px; padding: 3px 0 0 2px; }
.icons svg { width: 24px; height: 24px; overflow: visible; }
.sep { width: 2px; height: 24px; background: #d2d5de; }

.work { height: 783px; flex: none; display: grid; grid-template: 750px 33px / 64px 1656px 200px; margin-top: -3px; }
.tools {
  grid-row: 1 / 3; width: 58px; padding-top: 9px; display: grid; grid-template-columns: 28px 28px; grid-auto-rows: 28px; align-content: start;
  background: linear-gradient(#c9d0e3, #c9d0e3) 3px 4px / 55px 1px no-repeat, linear-gradient(#c9d0e3, #c9d0e3) 3px 6px / 55px 1px no-repeat;
}
.tools svg { width: 28px; height: 28px; }
.tools .more { background: linear-gradient(135deg, transparent 50%, #666 50%) right bottom / 6px 6px no-repeat; }
.ln { fill: none; stroke: #444; stroke-width: 2.2; }
.nd { fill: #fff; stroke: #000; stroke-width: 2.6; }

.viewport { position: relative; border: 1px solid #b9c3dc; background: #9da3aa; }
.scene { width: 1654px; height: 748px; }
.axis { font: 18px "Open Sans", sans-serif; fill: #666a6f; }
.view-label {
  position: absolute; left: 0; top: 0; width: 127px; height: 24px; padding-left: 9px; display: flex; align-items: center;
  background: #859eef; border-radius: 0 0 7px 0; font: bold 16px/22px "Open Sans", sans-serif; color: #2e2e38;
}
.view-label span { width: 103px; margin-top: -1px; }
.view-label svg { width: 14px; height: 24px; }
.view-tabs { grid-column: 2; grid-row: 2; display: flex; font: 15.8px/28px "Open Sans", sans-serif; gap: 23px; height: 30px; }
.current { position: relative; padding-left: 15px; }
.current svg { position: absolute; left: 0; top: 0; width: 108px; height: 28px; }
.plus { width: 12px; height: 12px; margin: 9px 0 0 1px; }

.panel { grid-column: 3; grid-row: 1 / 3; position: relative; padding: 0 1px 8px 7px; display: flex; flex-direction: column; }
h1 { font-size: 16px; line-height: 26px; height: 27px; padding-left: 5px; background: linear-gradient(#c9d0e3, #c9d0e3) 116px 12px / 80px 1px no-repeat, linear-gradient(#c9d0e3, #c9d0e3) 116px 14px / 80px 1px no-repeat; }
.panel-tabs { height: 30px; display: flex; align-items: center; gap: 3.7px; border-bottom: 1px solid #b9c3dc; margin-top: -1px; }
.panel-tabs svg { width: 24px; height: 24px; margin: 0; }
.panel-tabs .pgear { margin-left: 5px; }
.ptab { width: 27px; height: 31px; margin-bottom: -1px; border: 1px solid #b9c3dc; border-bottom: 0; background: #ebecf0; display: flex; align-items: center; justify-content: center; margin-right: 1px; padding-right: 1px; }
.ptab { padding: 0 0 0 1px; }
.wheel { width: 18px; height: 18px; border-radius: 50%; background: radial-gradient(circle, #fff 0 4.500px, transparent 5px), conic-gradient(#f22, #f0c 17%, #33f 35%, #0cf 50%, #2e2 67%, #fe0 83%, #f22); border: 1px solid #333; }
.panel-body { flex: 1; min-height: 0; border: 1px solid #b9c3dc; border-top: 0; margin-left: 1px; display: flex; flex-direction: column; }
.modes { display: flex; gap: 5px; padding: 4px 0 0 6px; height: 45px; flex: none; }
.modes svg { width: 35px; height: 35px; }
.modes .sel { background: #a9b9ee; }
.scroller { height: 652px; flex: none; display: flex; }
.props { width: 173px; overflow: hidden; padding: 5px 0 0 9px; flex: none; }
h2 { height: 33px; font-size: 19px; line-height: 33px; border-bottom: 1px solid #dcdfe8; }
dl { height: 27px; display: flex; margin-left: 20px; border-bottom: 1px solid #dcdfe8; line-height: 27px; }
dt { width: 81px; flex: none; padding-left: 4px; border-right: 1px solid #dcdfe8; }
dt i { margin-right: 1px; }
dd { flex: 1; min-width: 0; overflow: hidden; background: #fff; padding-left: 4px; font: 15.6px/27px "Open Sans", sans-serif; }
dd.name { font-size: 16.3px; }
dd.cjk { font: 16px/27px "Noto Sans CJK SC", sans-serif; padding-left: 3px; }
.dim dt { color: #777; }
dd.flat { background: none; padding-left: 1px; }
dd.flat.num { padding-left: 4px; }
dd .box { margin: 5px 0 0 2px; }
.box { width: 16px; height: 16px; flex: none; display: block; border: 1px solid #222; background: #fff; }
.box svg { width: 14px; height: 14px; }
button { width: 90px; height: 25px; margin-top: 1px; display: block; border: 1px solid #a8a8a8; background: #e1e1e1; font: 16px/21px "Noto Sans CJK SC", sans-serif; padding: 0 0 0 28px; text-align: left; color: #000; }
.vbar { flex: 1; display: flex; flex-direction: column; background: #f0f0f0; }
.vbar svg { width: 16px; height: 21px; }
.vbar .thumb { height: 607px; background: #cdcdcd; }
.hbar { flex: 1; display: flex; background: #f0f0f0; }
.hbar svg { width: 21px; height: 21px; }
.hbar .thumb { width: 95px; background: #cdcdcd; }
.hbar .end { margin-left: 32px; }
.capsule { position: absolute; right: 1px; top: 5px; width: 10px; height: 64px; border: 2px solid #6e6e6e; border-radius: 5px; background: #f2f2f4; }
.capsule span { display: block; width: 4px; height: 26px; margin: 33px 0 0 1px; border-radius: 0 0 2px 2px; background: #fb7a2a; }

.osnap { height: 29px; flex: none; display: flex; align-items: center; padding-left: 4px; gap: 8px; }
.osnap .grip { height: 24px; margin-right: -3px; }
.osnap label { display: flex; align-items: center; gap: 4px; }
.box.off { width: 14px; height: 14px; background: #ddd; border-color: #aaa; margin: 0 1px; }
.osnap .wide { margin-left: 16px; }

.status {
  height: 21px; flex: none; border-top: 1px solid #b9c3dc; display: grid; line-height: 21px; overflow: hidden;
  grid-template-columns: 155px 136px 108px 108px 208px 76px 46px 75px 77px 76px 61px 106px 60px 620px 8px;
}
.status > span { border-right: 1px solid #b9c3dc; padding-left: 5px; }
.status .first { border: 0; padding-left: 4px; }
.status .coord { text-align: right; padding-right: 2px; font-size: 15.4px; }
.status .mid { text-align: center; }
.status .layer { display: flex; gap: 3px; padding-left: 4px; }
u { width: 13px; height: 13px; background: #000; margin-top: 3px; }
.status .act { font-weight: 700; background: #cfd6ec; line-height: 19px; padding-left: 6px; }
.status .cpu { padding-left: 2px; word-spacing: 1.5px; }

.taskbar { height: 50px; flex: none; display: flex; background: #d5e2e9; color: #111; }
.start { width: 20px; height: 20px; margin: 15px 20px 0; }
.search { width: 430px; height: 49px; margin-top: 1px; border: 3px solid #c9c9c9; background: #fff; display: flex; align-items: center; gap: 15px; padding-left: 12px; font-size: 19px; color: #222; }
.search svg { width: 20px; height: 20px; }
.apps { width: 434px; display: grid; grid-template-columns: 60px 60px 68px 58px 64px 62px 61px; }
.apps > div { display: flex; align-items: center; justify-content: center; }
.apps svg { width: 30px; height: 30px; }
.run { background: linear-gradient(#80dcc2, #80dcc2) center bottom / 51px 3px no-repeat; }
.run.rh { background: linear-gradient(#80dcc2, #80dcc2) center bottom / 61px 3px no-repeat #eef4f8; border-right: 1px solid #d5e2e9; }
.run.wx { background: linear-gradient(#ff7400, #ff7400) center bottom / 61px 3px no-repeat #f7b27f; }
.tray { flex: 1; display: flex; align-items: center; border-right: 1px solid #9fb0ba; margin-right: 4px; font-family: "Open Sans", "Noto Sans CJK SC", sans-serif; }
.people { width: 20px; height: 20px; margin-left: 260px; }
.battery { width: 43px; height: 24px; margin-left: 39px; border: 2px solid #777; border-radius: 3px; outline: 1px solid #fff; background: linear-gradient(90deg, #149342 55%, #8f989d 55%); color: #fff; font-size: 12px; text-align: center; line-height: 19px; box-shadow: inset 0 0 0 1px #fff; }
.cloud { width: 28px; height: 20px; margin-left: 122px; }
.temp { margin-left: 11px; width: 96px; font-size: 18px; word-spacing: 6px; }
.sys { display: flex; gap: 10px; }
.sys svg { width: 20px; height: 20px; }
.ime { width: 20px; margin-left: 10px; font-size: 17px; font-weight: 500; }
.pin { width: 20px; height: 20px; border: 1px solid #333; background: #fff; margin-left: 15px; font-size: 16px; line-height: 17px; text-align: center; }
.clock { width: 92px; margin-left: 12px; display: flex; flex-direction: column; text-align: center; font-size: 15.4px; line-height: 23px; }
.note { width: 22px; height: 22px; margin-left: 16px; }

.mini { position: absolute; left: 8px; top: 996px; width: 183px; height: 34px; background: #fff; border: 1px solid #888; border-bottom: 0; box-shadow: 0 -2px 7px #0005; clip-path: inset(-12px -12px 0 -12px); }
.mini svg { width: 182px; height: 33px; }
.toast { position: absolute; left: 1618px; top: 767px; width: 300px; height: 38px; background: #484848; display: flex; align-items: center; padding: 1px 4px 0 10px; font-size: 12px; color: #fff; }
.toast svg { width: 18px; height: 18px; margin-right: 6px; }
.msg { margin-right: auto; }
.skip { color: #999; margin-right: 5px; }
.block { width: 60px; height: 20px; line-height: 20px; background: #0db90d; text-align: center; }
```
